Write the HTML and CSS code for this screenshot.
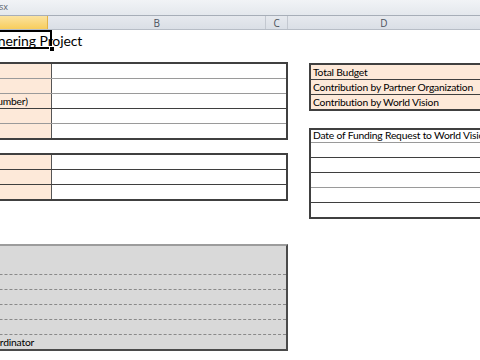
FILE: index.html
```html
<!DOCTYPE html>
<html>
<head>
	<title>Partnering_Project.xlsx</title>
	<link rel="stylesheet" href="styles.css">
</head>
<body>

	<div class="titlebar"><span class="doc">Partnering_Project.xlsx</span></div>

	<div class="colheads">
		<div class="ch ch-a sel"></div>
		<div class="ch ch-b">B</div>
		<div class="ch ch-c">C</div>
		<div class="ch ch-d">D</div>
	</div>

	<div class="sheet">
		<div class="left">
			<div class="title-cell">
				<span class="title">Partnering Project</span>
				<span class="handle"></span>
			</div>

			<div class="box info">
				<div class="row"><div class="lab">Project Name</div><div class="val"></div></div>
				<div class="row light"><div class="lab">Location</div><div class="val"></div></div>
				<div class="row light"><div class="lab">Contact (Phone Number)</div><div class="val"></div></div>
				<div class="row"><div class="lab">Email</div><div class="val"></div></div>
				<div class="row light"><div class="lab">Start Date</div><div class="val"></div></div>
			</div>

			<div class="box info second">
				<div class="row"><div class="lab">Address</div><div class="val"></div></div>
				<div class="row"><div class="lab">City</div><div class="val"></div></div>
				<div class="row"><div class="lab">Country</div><div class="val"></div></div>
			</div>

			<div class="box grey">
				<div class="grow tall"></div>
				<div class="grow"></div>
				<div class="grow"></div>
				<div class="grow"></div>
				<div class="grow"></div>
				<div class="grow"><span class="glab">Project Coordinator</span></div>
			</div>
		</div>

		<div class="right">
			<div class="box budget">
				<div class="row"><div class="txt">Total Budget</div></div>
				<div class="row"><div class="txt">Contribution by Partner Organization</div></div>
				<div class="row"><div class="txt">Contribution by World Vision</div></div>
			</div>

			<div class="box dates">
				<div class="row head"><div class="txt">Date of Funding Request to World Vision</div></div>
				<div class="row light"></div>
				<div class="row"></div>
				<div class="row"></div>
				<div class="row light"></div>
				<div class="row"></div>
			</div>
		</div>
	</div>

</body>
</html>
```

FILE: styles.css
```css
		*{
			box-sizing: border-box;
		}
		body{
			margin: 0;
			width: 480px;
			height: 360px;
			overflow: hidden;
			background: #fff;
			font-family: Lato, "Liberation Sans", sans-serif;
			font-size: 10.3px;
			letter-spacing: -0.2px;
			color: #000;
		}

		/* window title */
		.titlebar{
			height: 16px;
			background: linear-gradient(#f1f3f6, #e4e8ed);
			border-bottom: 1px solid #a7aeb8;
			overflow: hidden;
			white-space: nowrap;
		}
		.titlebar .doc{
			display: inline-block;
			width: 140px;
			margin-left: -132px;
			text-align: right;
			font-family: "Open Sans", sans-serif;
			font-size: 9px;
			letter-spacing: 0;
			line-height: 14px;
			color: #5a616b;
		}

		/* column headers */
		.colheads{
			display: flex;
			height: 14px;
			background: linear-gradient(#e6e9ee, #dadfe6);
			border-bottom: 1px solid #b7bdc6;
			font-family: "Open Sans", sans-serif;
			font-size: 10px;
			letter-spacing: 0;
			line-height: 14px;
			color: #4b525c;
		}
		.ch{
			text-align: center;
			border-right: 1px solid #c3c8d0;
		}
		.ch-a{ width: 52px; }
		.ch-b{ width: 236px; }
		.ch-c{ width: 23px; }
		.ch-d{ width: 208px; border-right: none; }
		.sel{
			background: linear-gradient(#fbe3a0, #f8cd5c);
			border-right: 1px solid #e2b347;
		}

		/* sheet */
		.sheet{
			display: flex;
			gap: 21px;
		}
		.left{
			width: 378px;
			margin-left: -90px;
			flex: none;
		}
		.right{
			width: 220px;
			flex: none;
		}

		.title-cell{
			position: relative;
			width: 142px;
			height: 19px;
			border: 2px solid #000;
			white-space: nowrap;
		}
		.title{
			font-size: 14px;
			letter-spacing: -0.1px;
			line-height: 18px;
			padding-left: 61px;
		}
		.handle{
			position: absolute;
			right: -5px;
			bottom: -5px;
			width: 6px;
			height: 6px;
			background: #000;
			border: 1px solid #fff;
		}

		.box{
			border: 2px solid #404040;
			border-left: none;
		}
		.row{
			display: flex;
			height: 15px;
			border-top: 1px solid #3f3f3f;
			line-height: 14px;
			white-space: nowrap;
		}
		.row:first-child{
			height: 14px;
			border-top: none;
		}
		.row.light{
			border-top-color: #9a9a9a;
		}

		.info{
			margin-top: 13px;
		}
		.info.second{
			margin-top: 13px;
		}
		.lab{
			width: 142px;
			padding-left: 10px;
			background: #fde9d9;
			border-right: 1px solid #555;
			overflow: hidden;
		}
		.val{
			flex: 1;
		}

		.grey{
			margin-top: 43px;
			background: #d9d9d9;
			border-top: 2px solid #9c9c9c;
			border-bottom-color: #4a4a4a;
			border-right-color: #4a4a4a;
		}
		.grow{
			height: 15px;
			border-top: 1px dashed #8a8a8a;
			line-height: 14px;
			padding-left: 39px;
			white-space: nowrap;
		}
		.grow.tall{
			height: 28px;
			border-top: none;
		}

		.budget{
			margin-top: 33px;
			border: 2px solid #404040;
			border-right: none;
			background: #fde9d9;
		}
		.dates{
			margin-top: 17px;
			border: 2px solid #404040;
			border-right: none;
		}
		.dates .head{
			height: 12px;
			line-height: 11px;
		}
		.txt{
			padding-left: 2px;
		}
```
